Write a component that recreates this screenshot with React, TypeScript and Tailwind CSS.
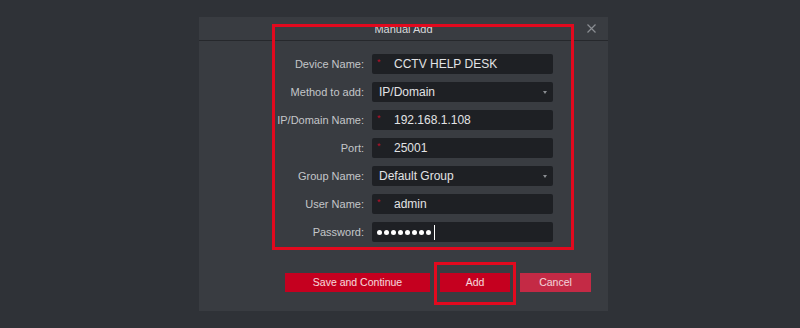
import React from "react";

const font = { fontFamily: '"Liberation Sans", Arial, sans-serif' };

type Row = {
  label: string;
  value: string;
  required?: boolean;
  select?: boolean;
  password?: boolean;
};

const rows: Row[] = [
  { label: "Device Name:", value: "CCTV HELP DESK", required: true },
  { label: "Method to add:", value: "IP/Domain", select: true },
  { label: "IP/Domain Name:", value: "192.168.1.108", required: true },
  { label: "Port:", value: "25001", required: true },
  { label: "Group Name:", value: "Default Group", select: true },
  { label: "User Name:", value: "admin", required: true },
  { label: "Password:", value: "", password: true },
];

function Field({ row }: { row: Row }) {
  return (
    <div className="flex items-center h-5">
      <div className="w-[173px] pr-2 text-right text-[11px] text-[#c4c6c9]">{row.label}</div>
      <div className="relative flex items-center w-[181px] h-5 rounded-[2px] bg-[#1e2024] text-[12px] text-[#e2e3e5]">
        {row.required && (
          <span className="absolute left-[5px] top-[2px] text-[9px] text-[#b80f28]">*</span>
        )}
        {row.password ? (
          <span className="flex items-center pl-[5px] gap-[2px]">
            {[0, 1, 2, 3, 4, 5, 6, 7].map((i) => (
              <span key={i} className="w-[5px] h-[5px] rounded-full bg-white" />
            ))}
            <span className="ml-[1px] w-px h-[15px] bg-white" />
          </span>
        ) : (
          <span className={row.required ? "pl-[22px]" : "pl-[7px]"}>{row.value}</span>
        )}
        {row.select && (
          <span className="absolute right-[6px] top-[9px] w-0 h-0 border-l-[2.5px] border-r-[2.5px] border-t-[3px] border-l-transparent border-r-transparent border-t-[#8a8d92]" />
        )}
      </div>
    </div>
  );
}

export default function App() {
  return (
    <div className="relative w-[800px] h-[328px] bg-[#2f3237] overflow-hidden" style={font}>
      <div className="ml-[199px] pt-[17px]">
        <div className="w-[409px] h-[294px] bg-[#393c41] flex flex-col">
          <div className="relative h-6 border-b border-[#26282c] flex items-center justify-center text-[11px] text-[#d6d7d9]">
            <span className="pt-[2px]">Manual Add</span>
            <svg className="absolute right-[12px] top-[7px]" width="9" height="9" viewBox="0 0 9 9">
              <path d="M0.5 0.5 L8.5 8.5 M8.5 0.5 L0.5 8.5" stroke="#8a8d92" strokeWidth="1.2" />
            </svg>
          </div>
          <div className="flex flex-col gap-2 pt-[13px]">
            {rows.map((r) => (
              <Field key={r.label} row={r} />
            ))}
          </div>
          <div className="flex pl-[86px] mt-[31px] gap-[10px] text-[10.5px]">
            <div className="w-[145px] h-[19px] flex items-center justify-center bg-[#c5001f] text-white/85">
              Save and Continue
            </div>
            <div className="w-[70px] h-[19px] flex items-center justify-center bg-[#c5001f] text-white/85">
              Add
            </div>
            <div className="w-[71px] h-[19px] flex items-center justify-center bg-[#c42a45] text-white/80">
              Cancel
            </div>
          </div>
        </div>
      </div>
      <div className="absolute left-[272px] top-[24px] w-[302px] h-[226px] border-[3px] border-[#e2091e]" />
      <div className="absolute left-[434px] top-[262px] w-[82px] h-[43px] border-[3px] border-[#e2091e]" />
    </div>
  );
}
